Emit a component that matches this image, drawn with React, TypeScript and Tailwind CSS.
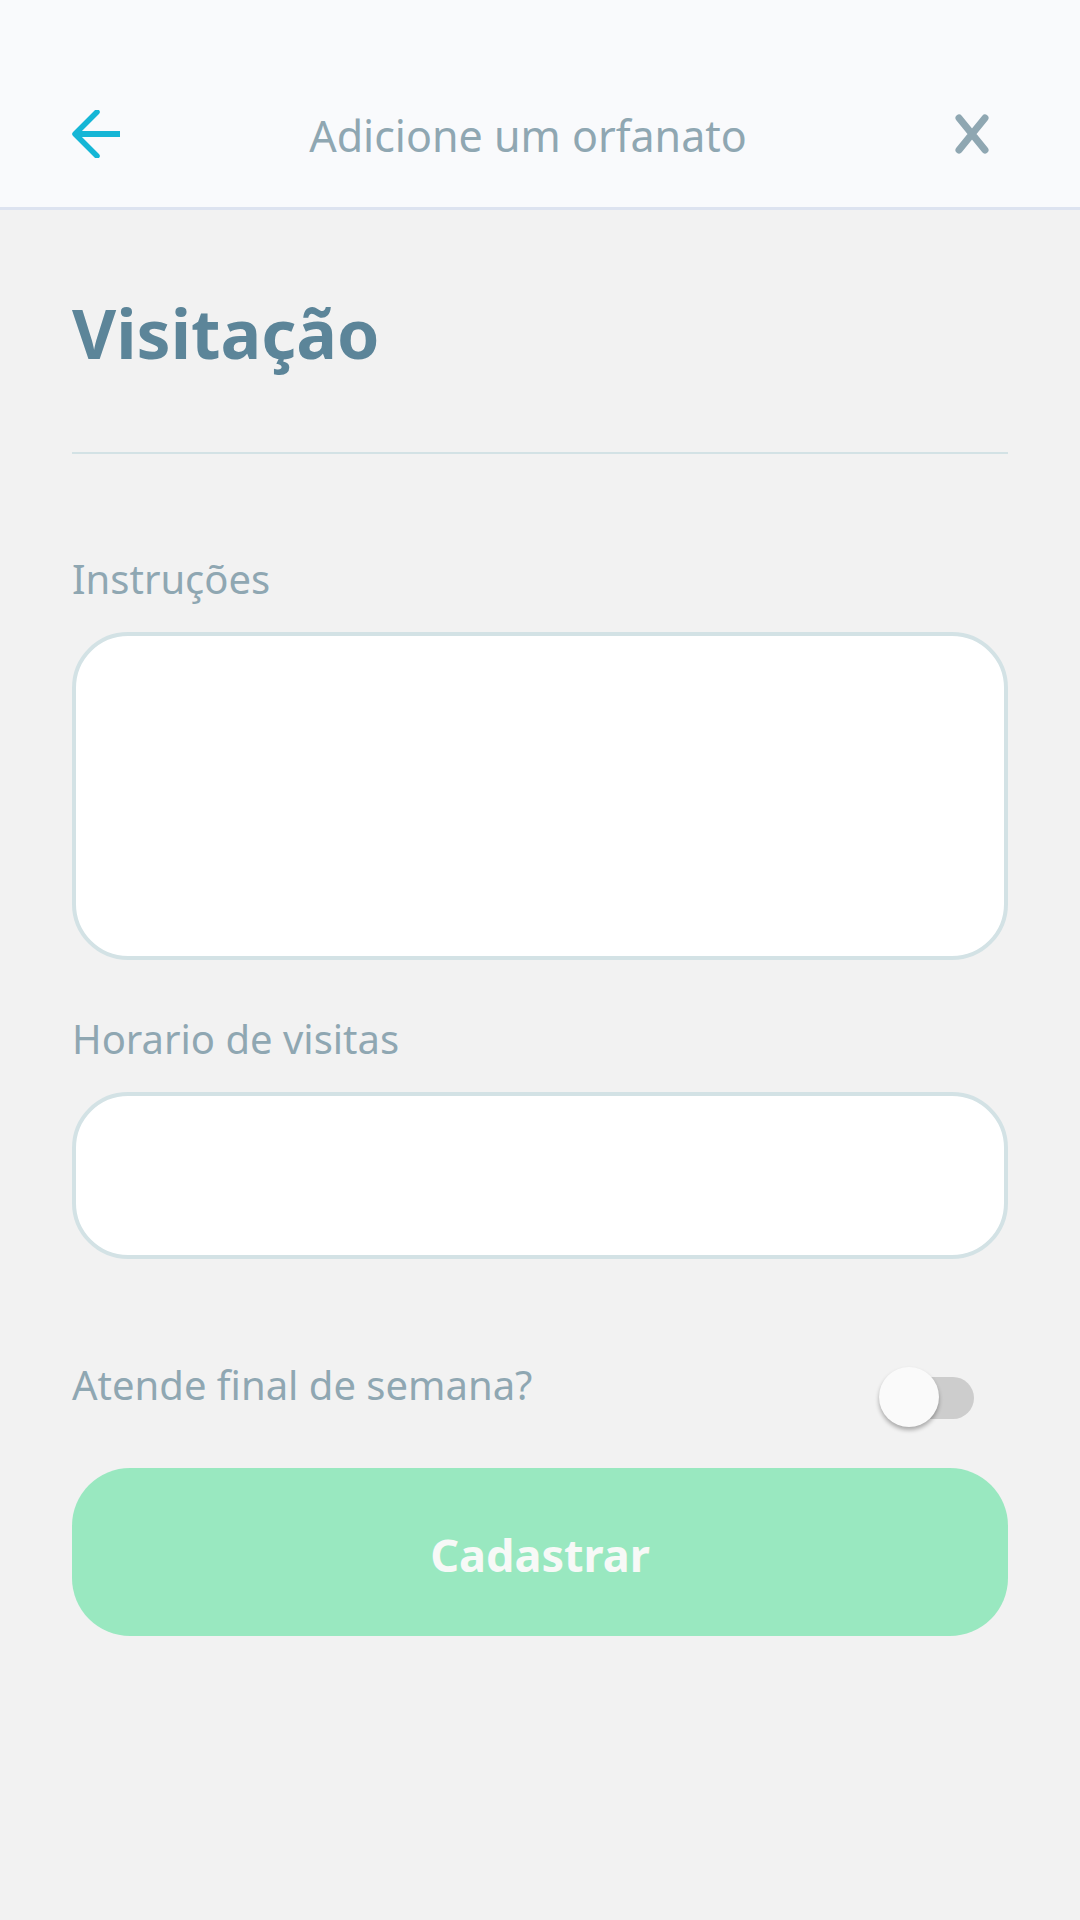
import React from "react";

export default function App() {
  return (
    <div className="w-[1080px] min-h-[1920px] bg-[#f2f2f2] font-['Noto_Sans',sans-serif]">
      <header className="h-[210px] bg-[#f9fafc] border-b-[3px] border-[#dde3f0] pt-[62px] pl-[72px] pr-[90px]">
        <div className="h-[143px] flex items-center">
          <svg width="48" height="48" viewBox="0 0 48 48" fill="none" className="shrink-0">
            <path d="M48 24H5" stroke="#15b6d6" strokeWidth="6" />
            <path d="M25 2L3 24L25 46" stroke="#15b6d6" strokeWidth="5.5" strokeLinecap="round" strokeLinejoin="round" />
          </svg>
          <div className="flex-1 text-center text-[43px] leading-none text-[#8fa7b2] pt-[4px] mr-[18px]">Adicione um orfanato</div>
          <svg width="36" height="40" viewBox="0 0 36 40" fill="none" className="shrink-0">
            <path d="M5 4L31 36M31 4L5 36" stroke="#8fa7b2" strokeWidth="7" strokeLinecap="round" />
          </svg>
        </div>
      </header>

      <main className="px-[72px] flex flex-col">
        <h1 className="mt-[89px] text-[68px] leading-none font-bold text-[#5c8599]">Visitação</h1>
        <div className="mt-[85px] h-[2px] bg-[#d3e2e5]" />

        <label className="mt-[105px] text-[40px] leading-none text-[#8fa7b2]">Instruções</label>
        <div className="mt-[33px] h-[328px] bg-white border-[4px] border-[#d3e2e5] rounded-[56px]" />

        <label className="mt-[59px] text-[40px] leading-none text-[#8fa7b2]">Horario de visitas</label>
        <div className="mt-[33px] h-[167px] bg-white border-[4px] border-[#d3e2e5] rounded-[56px]" />

        <div className="mt-[106px] flex items-start justify-between pr-[34px]">
          <span className="text-[40px] leading-none text-[#8fa7b2]">Atende final de semana?</span>
          <div className="relative w-[95px] h-[60px] mt-[2px]">
            <div className="absolute right-0 top-[10px] w-[78px] h-[42px] rounded-full bg-[#cdcdcd]" />
            <div className="absolute left-0 top-0 w-[60px] h-[60px] rounded-full bg-[#fafafa] shadow-[0_3px_4px_rgba(0,0,0,0.3)]" />
          </div>
        </div>

        <button className="mt-[41px] h-[168px] rounded-[58px] bg-[#99e8c0] flex items-center justify-center pt-[6px] text-[45px] font-bold text-[#f7f9f7]">
          Cadastrar
        </button>
      </main>
    </div>
  );
}
